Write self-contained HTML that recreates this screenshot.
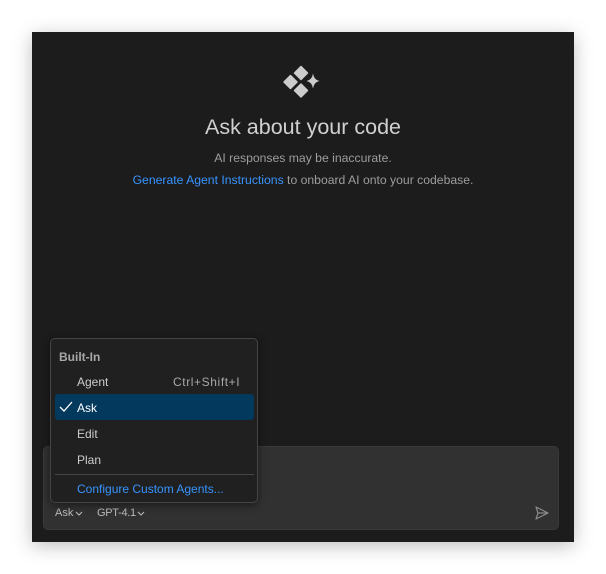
<!DOCTYPE html>
<html><head><meta charset="utf-8"><style>
*{margin:0;padding:0;box-sizing:border-box}
body{width:606px;height:574px;background:#fff;font-family:"Liberation Sans",sans-serif;position:relative;overflow:hidden}
.win{position:absolute;left:32px;top:32px;width:542px;height:510px;background:#1c1c1c;box-shadow:0 4px 18px rgba(0,0,0,.25)}
.t{position:absolute;white-space:nowrap}
.input{position:absolute;left:43px;top:446px;width:516px;height:84px;background:#313131;border:1px solid #3a3a3a;border-radius:5px}
.menu{position:absolute;left:50px;top:338px;width:208px;height:165px;background:#202020;border:1px solid #454545;border-radius:5px;box-shadow:0 2px 8px rgba(0,0,0,.5)}
.sel{position:absolute;left:4px;top:55px;width:199px;height:26px;background:#04395e;border-radius:3px}
</style></head><body>
<div class="win"></div>
<svg style="position:absolute;left:280px;top:62px" width="42" height="40" viewBox="280 62 42 40">
<g fill="#cccccc" stroke="#cccccc" stroke-width="1.5" stroke-linejoin="round">
<path d="M301 66.5 L307.5 73 L301 79.5 L294.5 73Z"/>
<path d="M290.5 75.5 L297 82 L290.5 88.5 L284 82Z"/>
<path d="M301 84 L307.5 90.5 L301 97 L294.5 90.5Z"/>
</g>
<path fill="#cccccc" d="M313 73.5 Q314 80 319.5 81 Q314 82 313 88.5 Q312 82 306.5 81 Q312 80 313 73.5Z"/>
</svg>
<div class="t" style="left:0;width:606px;text-align:center;top:115px;font-size:21.5px;color:#d0d0d0">Ask about your code</div>
<div class="t" style="left:0;width:606px;text-align:center;top:151px;font-size:12.2px;color:#9d9d9d">AI responses may be inaccurate.</div>
<div class="t" style="left:0;width:606px;text-align:center;top:173px;font-size:12.2px;color:#9d9d9d"><span style="color:#3794ff">Generate Agent Instructions</span> to onboard AI onto your codebase.</div>
<div class="input"></div>
<div class="t" style="left:55px;top:507px;font-size:11px;color:#bbb">Ask</div>
<svg style="position:absolute;left:75px;top:511px" width="8" height="6"><path d="M1 1 L4 4 L7 1" fill="none" stroke="#bbb" stroke-width="1.1"/></svg>
<div class="t" style="left:97px;top:507px;font-size:11px;color:#bbb;letter-spacing:-0.3px">GPT-4.1</div>
<svg style="position:absolute;left:137px;top:511px" width="8" height="6"><path d="M1 1 L4 4 L7 1" fill="none" stroke="#bbb" stroke-width="1.1"/></svg>
<svg style="position:absolute;left:534px;top:505px" width="16" height="16" viewBox="0 0 16 16"><path d="M2 2 L14 8 L2 14 L4 8 Z M4 8 H14" fill="none" stroke="#8a8a8a" stroke-width="1.2" stroke-linejoin="round"/></svg>
<div class="menu">
<div class="sel"></div>
<div class="t" style="left:8px;top:11px;font-size:12px;color:#a8a8a8;font-weight:bold">Built-In</div>
<div class="t" style="left:26px;top:36px;font-size:12px;color:#ccc">Agent</div>
<div class="t" style="left:122px;top:36px;font-size:12px;color:#a8a8a8;letter-spacing:0.6px">Ctrl+Shift+I</div>
<svg style="position:absolute;left:8px;top:62px" width="14" height="12"><path d="M1 6 L5 10 L13 1" fill="none" stroke="#fff" stroke-width="1.3"/></svg>
<div class="t" style="left:26px;top:62px;font-size:12px;color:#fff">Ask</div>
<div class="t" style="left:26px;top:88px;font-size:12px;color:#ccc">Edit</div>
<div class="t" style="left:26px;top:114px;font-size:12px;color:#ccc">Plan</div>
<div style="position:absolute;left:4px;top:135px;width:199px;height:1px;background:#454545"></div>
<div class="t" style="left:26px;top:143px;font-size:12px;color:#3794ff">Configure Custom Agents...</div>
</div>
</body></html>
